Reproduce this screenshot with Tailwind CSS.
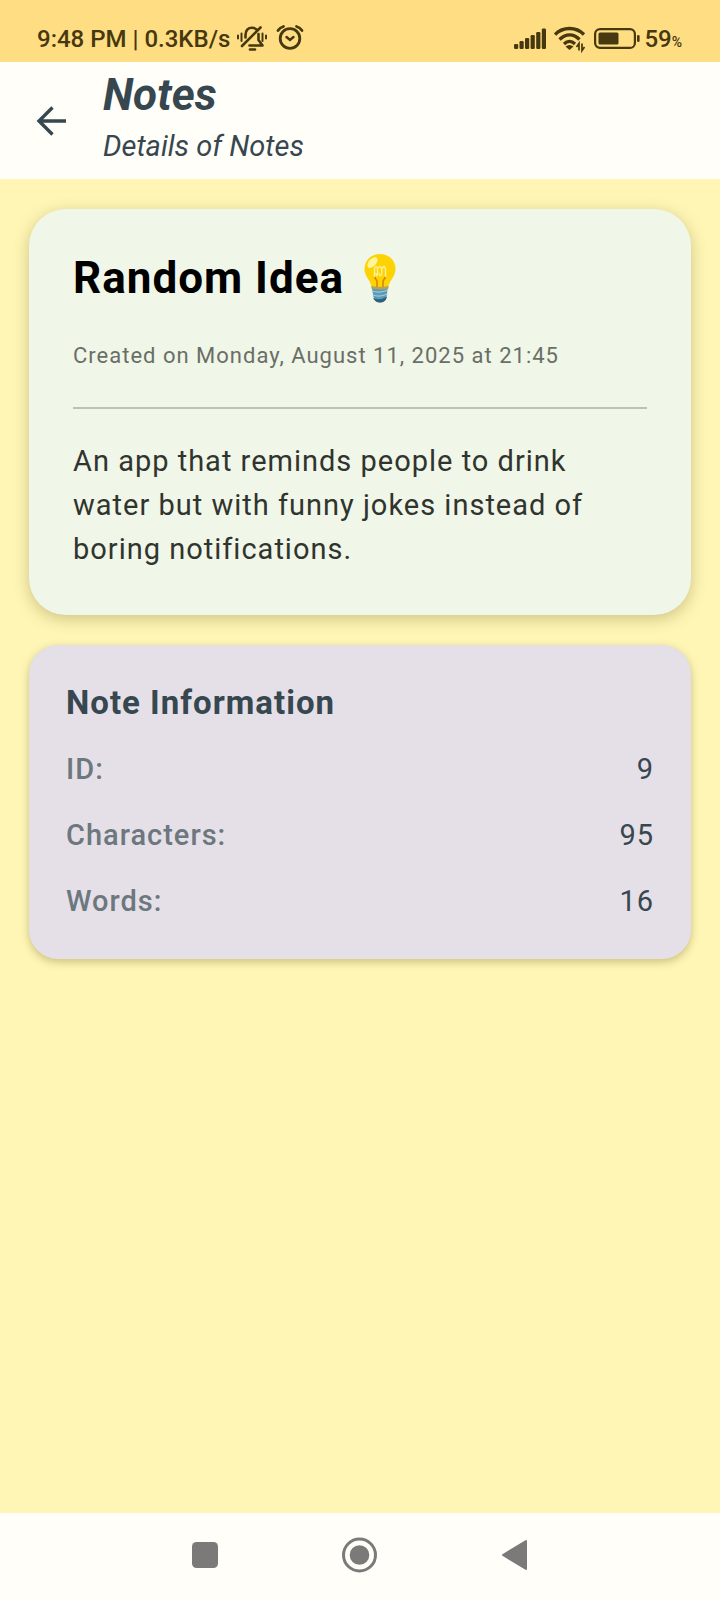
<!DOCTYPE html>
<html lang="en">
<head>
<meta charset="utf-8">
<meta name="viewport" content="width=device-width, initial-scale=1">
<title>Notes</title>
<script src="https://cdn.jsdelivr.net/npm/@tailwindcss/browser@4"></script>
</head>
<body class="flex min-h-screen flex-col bg-[#fff5b4] font-['Roboto',sans-serif] text-[#37474f]">

<!-- Status bar -->
<div class="flex items-end justify-between bg-[#ffdd82] pt-6 pr-[38px] pb-2 pl-[37px] text-[#46380f]">
  <div class="flex items-center">
    <span class="text-2xl leading-[30px] font-medium whitespace-nowrap">9:48 PM | 0.3KB/s</span>
    <svg class="ml-1.5 h-[30px] w-8" viewBox="0 0 32 30" fill="none" stroke="currentColor" stroke-width="2.600" stroke-linecap="round" stroke-linejoin="round" aria-label="Silent">
      <path d="M9.500 13.500V11C9.500 6.500 12 3.800 16 3.800Q18.500 3.800 20.500 5.500M22.500 10V16L26.500 21.500H13.500"/>
      <path d="M24.500 3.500L6 22"/>
      <path d="M14 25.500H19" stroke-width="2.600"/>
      <path d="M2 11.500V14.500M5.500 9.500V17M26.500 9.500V17M30 11.500V14.500" stroke-width="2"/>
    </svg>
    <svg class="ml-2 h-[30px] w-7" viewBox="0 0 28 30" fill="none" stroke="currentColor" stroke-width="2.800" stroke-linecap="round" aria-label="Alarm">
      <circle cx="14" cy="14.500" r="9.800"/>
      <path d="M10.500 13L14 16L17.500 13" stroke-width="2.400"/>
      <path d="M2 6.500Q4 3.500 7.500 2.500M26 6.500Q24 3.500 20.500 2.500"/>
    </svg>
  </div>
  <div class="flex items-center">
    <svg class="h-[30px] w-8" viewBox="0 0 32 30" fill="currentColor" aria-label="Signal">
      <rect x="0" y="20" width="4.200" height="5" rx="1.200"/>
      <rect x="5.500" y="17" width="4.200" height="8" rx="1.200"/>
      <rect x="11" y="14" width="4.200" height="11" rx="1.200"/>
      <rect x="16.600" y="11" width="4.200" height="14" rx="1.200"/>
      <rect x="22.200" y="8" width="4.200" height="17" rx="1.200"/>
      <rect x="27.800" y="4.500" width="4.200" height="20.500" rx="1.200"/>
    </svg>
    <svg class="ml-2 h-[30px] w-8" viewBox="0 0 32 30" fill="none" stroke="currentColor" stroke-width="3.300" aria-label="Wi-Fi">
      <path d="M1 10.500C9 2.500 22 2.500 30 10.500M5.500 15.500C12 9.500 19.500 9.500 25.500 15.500M10 20C13.500 16.500 17.500 16.500 21 20"/>
      <path d="M11.500 22.500Q15.500 19.500 19.500 22.500L15.500 26Z" fill="currentColor" stroke="none"/>
      <path d="M25 26.500V19.500L22.500 23M28 19.500V26.500L30.500 23" stroke-width="1.700"/>
    </svg>
    <svg class="ml-2 h-[30px] w-[46px]" viewBox="0 0 46 30" fill="none" aria-label="Battery">
      <rect x="1.100" y="5.100" width="39.800" height="18.800" rx="5" stroke="currentColor" stroke-width="2.200"/>
      <rect x="4.500" y="8.500" width="20" height="12" rx="1.500" fill="currentColor"/>
      <rect x="43" y="11" width="2.600" height="7" rx="1.300" fill="currentColor"/>
    </svg>
    <span class="ml-1 text-2xl leading-[30px] font-medium">59<span class="text-sm">%</span></span>
  </div>
</div>

<!-- App bar -->
<header class="flex items-center bg-[#fffef9] pl-9">
  <button type="button" aria-label="Back" class="text-[#37474f]">
    <svg class="h-8 w-8" viewBox="0 0 32 32" fill="none" stroke="currentColor" stroke-width="3.400">
      <path d="M30 16H3.500M16.500 2.500L3 16L16.500 29.500"/>
    </svg>
  </button>
  <div class="ml-[35px] pt-[7px] pb-[13px] italic">
    <h1 class="text-[44px] leading-[52px] font-bold">Notes</h1>
    <p class="mt-[5px] text-[29px] leading-10">Details of Notes</p>
  </div>
</header>

<main class="flex flex-1 flex-col gap-[30px] px-[29px] pt-[30px]">
  <!-- Note -->
  <article class="rounded-[37px] bg-[#f0f6e8] px-11 pt-[43px] pb-11 tracking-[1px] shadow-[0_4px_16px_rgba(60,60,0,0.26)]">
    <h2 class="flex items-center gap-5 text-[44px] leading-[52px] font-bold text-black">
      Random Idea
      <svg class="h-[50px] w-8" viewBox="0 0 32 50" role="img" aria-label="Light bulb">
        <path d="M7.500 33H24L22.500 44Q21 49.500 16 49.500T9.500 44Z" fill="#5b9ab5"/>
        <path d="M9 45Q16 48 23 43.500L22 46.500Q20 49.500 16 49.500T10 46.500Z" fill="#2f5f7a"/>
        <path d="M8 38Q16 40.500 24 37M8.700 42Q16 44.500 23.400 41" stroke="#9ccbdc" stroke-width="1.300" fill="none"/>
        <path d="M16 1C7 1 .5 7.500 .5 16C.5 23.500 6.500 27 7.500 34Q16 36 24.500 34C25.500 27 31.500 23.500 31.500 16C31.500 7.500 25 1 16 1Z" fill="#fdd304"/>
        <path d="M7.500 33Q16 35 24.500 33V35.500Q16 37.500 7.500 35.500Z" fill="#b5a254"/>
        <path d="M13 34V28L10.500 24M19 34V28L21.500 24" stroke="#d98400" stroke-width="1.500" fill="none"/>
        <path d="M10.500 24V16Q12 11 13.500 16V21Q12.500 25 11.800 20M13.500 21V16Q16 11 17.800 16V21Q16 25 15 20M17.800 21V16Q20 11 21.500 16V24" stroke="#fff09a" stroke-width="1.300" fill="none"/>
        <ellipse cx="8.500" cy="9.500" rx="3.600" ry="6.500" transform="rotate(42 8.500 9.500)" fill="#fff59a"/>
      </svg>
    </h2>
    <p class="mt-[37px] text-[22px] leading-[30px] text-[#696e66]">Created on Monday, August 11, 2025 at 21:45</p>
    <hr class="mt-9 border-t-2 border-[#bcc2b5]">
    <p class="mt-[30px] text-[29px] leading-[44px] text-[#30342e]">An app that reminds people to drink water but with funny jokes instead of boring notifications.</p>
  </article>

  <!-- Note metadata -->
  <section class="rounded-[29px] bg-[#e5e0e8] px-[37px] py-9 tracking-[1px] shadow-[0_3px_8px_rgba(60,60,0,0.28)]">
    <h2 class="text-[33px] leading-[44px] font-bold">Note Information</h2>
    <dl class="mt-[22px] flex flex-col gap-[22px] text-[29px] leading-[44px]">
      <div class="flex justify-between"><dt class="font-medium text-[#6c777e]">ID:</dt><dd>9</dd></div>
      <div class="flex justify-between"><dt class="font-medium text-[#6c777e]">Characters:</dt><dd>95</dd></div>
      <div class="flex justify-between"><dt class="font-medium text-[#6c777e]">Words:</dt><dd>16</dd></div>
    </dl>
  </section>
</main>

<!-- System navigation -->
<nav class="flex items-center justify-center gap-[119px] bg-[#fffef9] pt-6 pb-[27px] text-[#7b7a78]" aria-label="System">
  <button type="button" aria-label="Recent apps">
    <svg class="size-9" viewBox="0 0 36 36" fill="currentColor"><rect x="5" y="5" width="26" height="26" rx="4.500"/></svg>
  </button>
  <button type="button" aria-label="Home">
    <svg class="size-9" viewBox="0 0 36 36" fill="currentColor"><circle cx="17.500" cy="18" r="9.800"/><circle cx="17.500" cy="18" r="16" fill="none" stroke="currentColor" stroke-width="3"/></svg>
  </button>
  <button type="button" aria-label="Back">
    <svg class="size-9" viewBox="0 0 36 36" fill="currentColor" stroke="currentColor" stroke-width="2" stroke-linejoin="round"><path d="M29 4V32L6 18Z"/></svg>
  </button>
</nav>
</body>
</html>
